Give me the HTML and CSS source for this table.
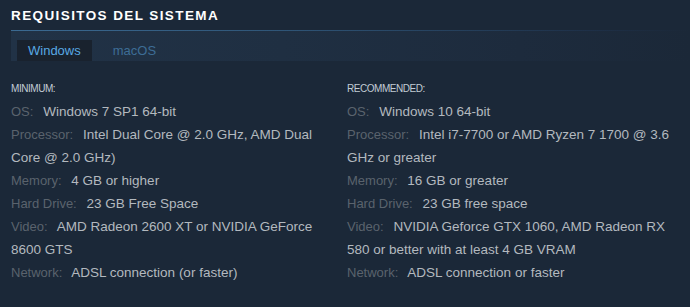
FILE: index.html
```html
<!DOCTYPE html>
<html>
<head>
<meta charset="utf-8">
<link rel="stylesheet" href="styles.css">
</head>
<body>
<div class="sysreq">
  <h2 class="title">Requisitos del sistema</h2>
  <div class="rule"></div>
  <div class="tabs">
    <div class="tab active">Windows</div>
    <div class="tab">macOS</div>
  </div>
  <div class="cols">
    <div class="col">
      <div class="head">Minimum:</div>
      <ul class="list">
        <li><strong class="lbl">OS:</strong> <span>Windows 7 SP1 64-bit</span></li>
        <li><strong class="lbl">Processor:</strong> <span>Intel Dual Core @ 2.0 GHz, AMD Dual</span><br><span>Core @ 2.0 GHz)</span></li>
        <li><strong class="lbl">Memory:</strong> <span>4 GB or higher</span></li>
        <li><strong class="lbl">Hard Drive:</strong> <span>23 GB Free Space</span></li>
        <li><strong class="lbl">Video:</strong> <span>AMD Radeon 2600 XT or NVIDIA GeForce</span><br><span>8600 GTS</span></li>
        <li><strong class="lbl">Network:</strong> <span>ADSL connection (or faster)</span></li>
      </ul>
    </div>
    <div class="col">
      <div class="head">Recommended:</div>
      <ul class="list">
        <li><strong class="lbl">OS:</strong> <span>Windows 10 64-bit</span></li>
        <li><strong class="lbl">Processor:</strong> <span>Intel i7-7700 or AMD Ryzen 7 1700 @ 3.6</span><br><span>GHz or greater</span></li>
        <li><strong class="lbl">Memory:</strong> <span>16 GB or greater</span></li>
        <li><strong class="lbl">Hard Drive:</strong> <span>23 GB free space</span></li>
        <li><strong class="lbl">Video:</strong> <span>NVIDIA Geforce GTX 1060, AMD Radeon RX</span><br><span>580 or better with at least 4 GB VRAM</span></li>
        <li><strong class="lbl">Network:</strong> <span>ADSL connection or faster</span></li>
      </ul>
    </div>
  </div>
</div>
</body>
</html>
```
FILE: styles.css
```css
html, body {
  margin: 0;
  padding: 0;
  background: #1b2838;
}
body {
  width: 690px;
  height: 307px;
  overflow: hidden;
  font-family: "Liberation Sans", Arial, sans-serif;
}
.sysreq {
  padding-left: 11px;
}
.title {
  margin: 0;
  padding-top: 6px;
  height: 20px;
  line-height: 20px;
  font-size: 13.5px;
  font-weight: bold;
  letter-spacing: 1.4px;
  text-transform: uppercase;
  color: #ffffff;
  margin-bottom: 4px;
}
.rule {
  height: 1px;
  background: linear-gradient(to right, #3b6a92 0%, #2f5577 40%, #1e3048 85%, rgba(27,40,56,0) 100%);
}
.tabs {
  display: flex;
  height: 21px;
  padding: 9px 0 0 6px;
  background: linear-gradient(to right, #213246 0%, #1f2f42 40%, #1d2b3d 75%, #1b2838 100%);
}
.tab {
  height: 21px;
  line-height: 21px;
  padding: 0 11px;
  margin-right: 10px;
  font-size: 13px;
  color: #3d6d96;
}
.tab.active {
  background: #19222e;
  color: #58a9e4;
}
.cols {
  display: grid;
  grid-template-columns: 330px 336px;
  column-gap: 6px;
  padding-top: 22px;
}
.head {
  font-size: 10px;
  line-height: 12px;
  letter-spacing: -0.45px;
  text-transform: uppercase;
  color: #c2ccd5;
  margin-bottom: 5px;
}
.list {
  list-style: none;
  margin: 0;
  padding: 0;
}
.list li {
  font-size: 13.5px;
  line-height: 23px;
  color: #b3b9bf;
  white-space: nowrap;
}
.lbl {
  font-weight: normal;
  font-size: 13px;
  color: #5a636d;
  margin-right: 6px;
}
```
